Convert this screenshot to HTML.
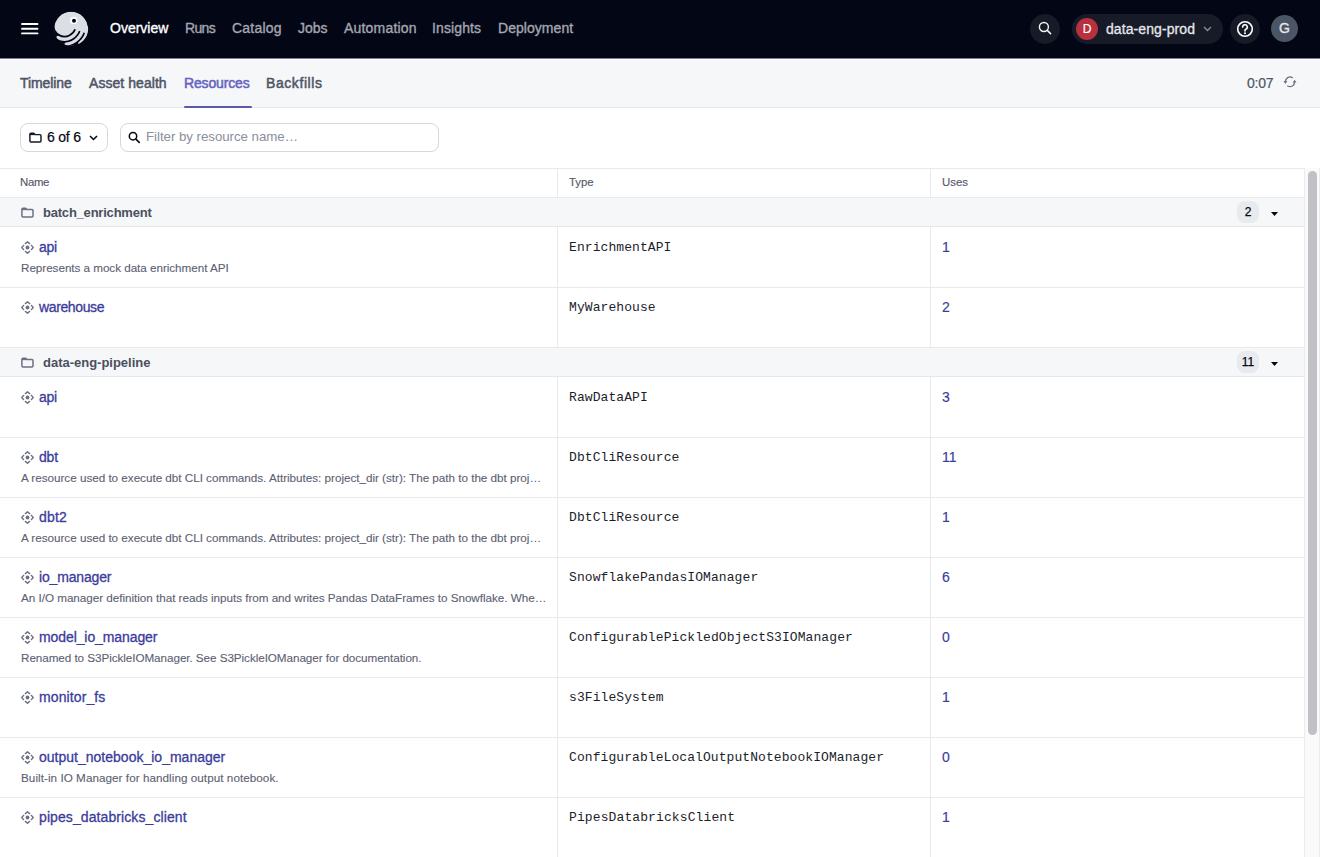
<!DOCTYPE html>
<html><head><meta charset="utf-8">
<style>
*{box-sizing:border-box;margin:0;padding:0}
html,body{width:1320px;height:857px;overflow:hidden;background:#fff;font-family:"Liberation Sans",sans-serif;color:#030615}
.abs{position:absolute}
#top{position:absolute;left:0;top:0;width:1320px;height:58px;background:#030615}
#top .nav{position:absolute;top:21px;font-size:14px;line-height:14px;color:#a3a6b1;white-space:nowrap;-webkit-text-stroke:0.35px currentColor}
#top .nav.active{color:#fff}
#sub{position:absolute;left:0;top:58px;width:1320px;height:50px;background:#f6f7f9;border-bottom:1px solid #e6e7eb;box-shadow:inset 0 1px 0 #7d7f88,inset 0 2px 0 #fff}
#sub .tab{position:absolute;top:18px;font-size:14px;line-height:14px;font-weight:normal;color:#4f5466;white-space:nowrap;-webkit-text-stroke:0.5px currentColor}
#sub .tab.active{color:#6563c1}
#filter{position:absolute;left:0;top:109px;width:1320px;height:59px;background:#fff}
.btn{position:absolute;left:20px;top:14px;width:88px;height:29px;border:1px solid #d5d7de;border-radius:8px;background:#fff}
.inp{position:absolute;left:120px;top:14px;width:319px;height:29px;border:1px solid #d5d7de;border-radius:8px;background:#fff}
#thead{position:absolute;left:0;top:168px;width:1304px;height:30px;border-top:1px solid #e8e9ed;border-bottom:1px solid #e8e9ed;background:#fff}
#thead .th{position:absolute;top:7px;font-size:11.4px;line-height:12px;color:#555a6b;-webkit-text-stroke:0.15px currentColor}
.grp{position:absolute;left:0;width:1304px;background:#f6f7f9;border-bottom:1px solid #e6e7eb}
.gname{position:absolute;left:43px;top:8px;font-size:13px;line-height:13px;font-weight:bold;color:#4a4f60;white-space:nowrap}
.badge{position:absolute;left:1237px;top:3px;width:22px;height:22px;border-radius:8px;background:#e9eaee;font-size:12px;line-height:22px;text-align:center;color:#030615;-webkit-text-stroke:0.25px currentColor}
.row{position:absolute;left:0;width:1304px;height:60px;border-bottom:1px solid #e8e9ed;background:#fff}
.vl{position:absolute;top:0;width:1px;height:60px;background:#e8e9ed}
.rname{position:absolute;left:39px;font-size:14px;line-height:14px;color:#3b3c9b;white-space:nowrap;-webkit-text-stroke:0.3px currentColor}
.rdesc{position:absolute;left:21px;font-size:11.7px;line-height:12px;color:#5c6172;white-space:nowrap;-webkit-text-stroke:0.1px currentColor}
.rtype{position:absolute;left:569px;font-family:"Liberation Mono",monospace;font-size:13px;line-height:13px;color:#1b1e2b;white-space:nowrap;letter-spacing:0.085px}
.ruses{position:absolute;left:942px;font-size:14px;line-height:14px;color:#3b3c9b;-webkit-text-stroke:0.15px currentColor}
#sb{position:absolute;left:1304px;top:168px;width:16px;height:689px;background:#fafafa;border-left:1px solid #ececec;border-right:1px solid #ececec}
#thumb{position:absolute;left:1308px;top:171px;width:9px;height:564px;border-radius:5px;background:#c1c1c5}
</style><style>#nav0{letter-spacing:0.000px}#nav1{letter-spacing:-0.667px}#nav2{letter-spacing:0.233px}#nav3{letter-spacing:0.000px}#nav4{letter-spacing:0.200px}#nav5{letter-spacing:0.114px}#nav6{letter-spacing:0.044px}#tab0{letter-spacing:-0.086px}#tab1{letter-spacing:0.055px}#tab2{letter-spacing:-0.150px}#tab3{letter-spacing:0.575px}#time{letter-spacing:-0.200px}#sixof{letter-spacing:-0.200px}#ph{letter-spacing:-0.043px}#dep{letter-spacing:0.083px}#thname{letter-spacing:-0.333px}#g0{letter-spacing:-0.213px}#g1{letter-spacing:-0.012px}#d0{letter-spacing:-0.042px}#d3{letter-spacing:-0.020px}#d4{letter-spacing:-0.020px}#d5{letter-spacing:-0.029px}#d6{letter-spacing:-0.061px}#d8{letter-spacing:0.046px}#t8{letter-spacing:0.077px}#t9{letter-spacing:0.110px}#t0{letter-spacing:0.083px}#nm0{letter-spacing:-0.300px}#nm1{letter-spacing:-0.375px}#nm2{letter-spacing:-0.300px}#nm3{letter-spacing:-0.200px}#nm4{letter-spacing:0.200px}#nm5{letter-spacing:-0.156px}#nm6{letter-spacing:-0.093px}#nm7{letter-spacing:0.111px}#nm8{letter-spacing:0.008px}#nm9{letter-spacing:0.091px}</style>
</head>
<body>
<div id="top">
  <svg class="abs" style="left:20px;top:20px" width="20" height="18" viewBox="0 0 20 18"><g stroke="#fff" stroke-width="1.9" stroke-linecap="round"><path d="M2 4H17.5"/><path d="M2 8.7H17.5"/><path d="M2 13.4H17.5"/></g></svg>
  <svg class="abs" style="left:52px;top:10px" width="40" height="38" viewBox="0 0 40 38">
    <defs><clipPath id="lc"><circle cx="19.05" cy="18.65" r="17.1"/></clipPath></defs>
    <g clip-path="url(#lc)">
    <circle cx="19.05" cy="18.65" r="16.85" fill="#dcdee6"/>
    <path d="M22.27 19.06L40.69 25.76A30 30 0 0 1 -15.69 5.24L2.73 11.94A10.4 10.4 0 0 0 22.27 19.06Z" fill="#030615"/>
    <g fill="none" stroke="#dcdee6" stroke-linecap="round"><path stroke-width="3.3" d="M26.10 16.69A13.65 13.65 0 0 1 5.88 27.44"/><path stroke-width="3.3" d="M31.03 17.12A18.6 18.6 0 0 1 14.12 34.03"/><path stroke-width="3.3" d="M35.91 17.55A23.5 23.5 0 0 1 27.92 33.24"/></g>
    </g>
    <circle cx="21.7" cy="10.4" r="3.7" fill="#fff"/>
    <circle cx="22" cy="10.8" r="2" fill="#030615"/>
  </svg>
  <div class="nav active" id="nav0" style="left:110px">Overview</div>
  <div class="nav" id="nav1" style="left:185px">Runs</div>
  <div class="nav" id="nav2" style="left:232px">Catalog</div>
  <div class="nav" id="nav3" style="left:298px">Jobs</div>
  <div class="nav" id="nav4" style="left:344px">Automation</div>
  <div class="nav" id="nav5" style="left:432px">Insights</div>
  <div class="nav" id="nav6" style="left:498px">Deployment</div>
  <!-- search -->
  <div class="abs" style="left:1030px;top:14px;width:30px;height:30px;border-radius:15px;background:#171a27"></div>
  <svg class="abs" style="left:1038px;top:21px" width="15" height="15" viewBox="0 0 15 15"><circle cx="5.9" cy="6" r="4.5" fill="none" stroke="#f4f4f6" stroke-width="1.4"/><path d="M9.2 9.3 12.5 12.6" stroke="#f4f4f6" stroke-width="1.6" stroke-linecap="round"/></svg>
  <!-- deployment pill -->
  <div class="abs" style="left:1072px;top:14px;width:151px;height:30px;border-radius:15px;background:#171a27"></div>
  <div class="abs" style="left:1076px;top:18px;width:22px;height:22px;border-radius:11px;background:#b9303e;color:#fff;font-size:12px;line-height:22px;text-align:center;-webkit-text-stroke:0.2px currentColor">D</div>
  <div class="abs" id="dep" style="left:1106px;top:22px;font-size:14px;line-height:14px;color:#e6e7ec;white-space:nowrap;-webkit-text-stroke:0.3px currentColor">data-eng-prod</div>
  <svg class="abs" style="left:1203px;top:26px" width="9" height="6" viewBox="0 0 9 6"><path d="M1 1 4.5 4.5 8 1" fill="none" stroke="#8d909c" stroke-width="1.3"/></svg>
  <!-- help -->
  <div class="abs" style="left:1230px;top:14px;width:30px;height:30px;border-radius:15px;background:#171a27"></div>
  <svg class="abs" style="left:1236px;top:20px" width="18" height="18" viewBox="0 0 18 18"><circle cx="9" cy="9" r="7.3" fill="none" stroke="#fff" stroke-width="1.6"/><path d="M6.7 7.1a2.3 2.3 0 1 1 3.2 2.1c-.6.3-.9.7-.9 1.3v.5" fill="none" stroke="#fff" stroke-width="1.6" stroke-linecap="round"/><circle cx="9" cy="13.2" r="1" fill="#fff"/></svg>
  <!-- avatar -->
  <div class="abs" style="left:1271px;top:15px;width:27px;height:27px;border-radius:14px;background:#4b5565;color:#e6e7ec;font-size:14px;line-height:27px;text-align:center;-webkit-text-stroke:0.3px currentColor">G</div>
</div>

<div id="sub">
  <div class="tab" id="tab0" style="left:20px">Timeline</div>
  <div class="tab" id="tab1" style="left:89px">Asset health</div>
  <div class="tab active" id="tab2" style="left:184px">Resources</div>
  <div class="tab" id="tab3" style="left:266px">Backfills</div>
  <div class="abs" style="left:184px;top:48px;width:68px;height:2px;background:#5a5aaa;border-radius:1px"></div>
  <div class="abs" id="time" style="left:1247px;top:18px;font-size:14px;line-height:14px;color:#4f5466;-webkit-text-stroke:0.2px currentColor">0:07</div>
  <svg class="abs" style="left:1282px;top:17px" width="16" height="14" viewBox="0 0 16 14"><g fill="none" stroke="#6b7082" stroke-width="1.3" stroke-linecap="round"><path d="M3.4 6.6A4.6 4.6 0 0 1 10.3 2.6"/><path d="M12.6 7A4.6 4.6 0 0 1 5.7 11"/></g><path d="M1.5 6.1H5.3L3.4 8.9Z" fill="#6b7082"/><path d="M14.5 7.5H10.7L12.6 4.7Z" fill="#6b7082"/></svg>
</div>

<div id="filter">
  <div class="btn"></div>
  <svg class="abs" style="left:28px;top:23px" width="15" height="12" viewBox="0 0 15 12"><g fill="none" stroke="#141826" stroke-width="1.45" stroke-linejoin="round"><path d="M1.9 2.6Q1.9 1.2 3.1 1.2H5.7L7 2.6H12Q13 2.6 13 3.7V8.7Q13 9.9 11.9 9.9H3Q1.9 9.9 1.9 8.7Z"/><path d="M1.9 2.4H6.5"/></g></svg>
  <div class="abs" id="sixof" style="left:47px;top:21px;font-size:14px;line-height:14px;color:#030615;-webkit-text-stroke:0.2px currentColor">6 of 6</div>
  <svg class="abs" style="left:89px;top:26px" width="9" height="6" viewBox="0 0 9 6"><path d="M1 1 4.5 4.5 8 1" fill="none" stroke="#030615" stroke-width="1.5"/></svg>
  <div class="inp"></div>
  <svg class="abs" style="left:128px;top:22px" width="13" height="13" viewBox="0 0 13 13"><circle cx="5" cy="5.2" r="3.7" fill="none" stroke="#030615" stroke-width="1.5"/><path d="M7.8 8 11.2 11.4" stroke="#030615" stroke-width="1.7" stroke-linecap="round"/></svg>
  <div class="abs" id="ph" style="left:146px;top:21px;font-size:13.3px;line-height:14px;color:#8a8f9c;white-space:nowrap">Filter by resource name…</div>
</div>

<div id="thead">
  <div class="th" id="thname" style="left:20px">Name</div>
  <div class="th" style="left:569px">Type</div>
  <div class="th" style="left:942px">Uses</div>
  <div class="abs" style="left:557px;top:0;width:1px;height:29px;background:#e8e9ed"></div>
  <div class="abs" style="left:930px;top:0;width:1px;height:29px;background:#e8e9ed"></div>
</div>

<div class="grp" style="top:198px;height:29px">
<svg class="abs" style="left:20px;top:9px" width="15" height="12" viewBox="0 0 15 12"><g fill="none" stroke="#6b7082" stroke-width="1.5" stroke-linejoin="round"><path d="M1.9 2.6Q1.9 1.2 3.1 1.2H5.7L7 2.6H12Q13 2.6 13 3.7V8.7Q13 9.9 11.9 9.9H3Q1.9 9.9 1.9 8.7Z"/><path d="M1.9 2.4H6.5"/></g></svg>
<div class="gname" id="g0">batch_enrichment</div>
<div class="badge">2</div>
<svg class="abs" style="left:1271px;top:14px" width="7" height="4" viewBox="0 0 7 4"><path d="M0 0h7L3.5 3.9z" fill="#030615"/></svg>
</div>
<div class="row" style="top:227px;height:61px">
<svg class="abs" style="left:21px;top:14px" width="13" height="13" viewBox="0 0 13 13"><g fill="none" stroke="#6b7082" stroke-width="1.4" stroke-linecap="round" stroke-linejoin="round"><path d="M4.4 2.6 6.5 0.8 8.6 2.6"/><path d="M4.4 10.4 6.5 12.2 8.6 10.4"/><path d="M2.6 4.4 0.8 6.5 2.6 8.6"/><path d="M10.4 4.4 12.2 6.5 10.4 8.6"/></g><circle cx="6.5" cy="6.5" r="1.9" fill="#6b7082"/></svg>
<div class="rname" id="nm0" style="top:13px">api</div>
<div class="rdesc" id="d0" style="top:35px">Represents a mock data enrichment API</div>
<div class="rtype" id="t0" style="top:14px">EnrichmentAPI</div>
<div class="ruses" style="top:13px">1</div>
<div class="vl" style="left:557px;height:61px"></div><div class="vl" style="left:930px;height:61px"></div>
</div>
<div class="row" style="top:288px;height:60px">
<svg class="abs" style="left:21px;top:13px" width="13" height="13" viewBox="0 0 13 13"><g fill="none" stroke="#6b7082" stroke-width="1.4" stroke-linecap="round" stroke-linejoin="round"><path d="M4.4 2.6 6.5 0.8 8.6 2.6"/><path d="M4.4 10.4 6.5 12.2 8.6 10.4"/><path d="M2.6 4.4 0.8 6.5 2.6 8.6"/><path d="M10.4 4.4 12.2 6.5 10.4 8.6"/></g><circle cx="6.5" cy="6.5" r="1.9" fill="#6b7082"/></svg>
<div class="rname" id="nm1" style="top:12px">warehouse</div>
<div class="rtype" id="t1" style="top:13px">MyWarehouse</div>
<div class="ruses" style="top:12px">2</div>
<div class="vl" style="left:557px;height:60px"></div><div class="vl" style="left:930px;height:60px"></div>
</div>
<div class="grp" style="top:348px;height:29px">
<svg class="abs" style="left:20px;top:9px" width="15" height="12" viewBox="0 0 15 12"><g fill="none" stroke="#6b7082" stroke-width="1.5" stroke-linejoin="round"><path d="M1.9 2.6Q1.9 1.2 3.1 1.2H5.7L7 2.6H12Q13 2.6 13 3.7V8.7Q13 9.9 11.9 9.9H3Q1.9 9.9 1.9 8.7Z"/><path d="M1.9 2.4H6.5"/></g></svg>
<div class="gname" id="g1">data-eng-pipeline</div>
<div class="badge">11</div>
<svg class="abs" style="left:1271px;top:14px" width="7" height="4" viewBox="0 0 7 4"><path d="M0 0h7L3.5 3.9z" fill="#030615"/></svg>
</div>
<div class="row" style="top:377px;height:61px">
<svg class="abs" style="left:21px;top:14px" width="13" height="13" viewBox="0 0 13 13"><g fill="none" stroke="#6b7082" stroke-width="1.4" stroke-linecap="round" stroke-linejoin="round"><path d="M4.4 2.6 6.5 0.8 8.6 2.6"/><path d="M4.4 10.4 6.5 12.2 8.6 10.4"/><path d="M2.6 4.4 0.8 6.5 2.6 8.6"/><path d="M10.4 4.4 12.2 6.5 10.4 8.6"/></g><circle cx="6.5" cy="6.5" r="1.9" fill="#6b7082"/></svg>
<div class="rname" id="nm2" style="top:13px">api</div>
<div class="rtype" id="t2" style="top:14px">RawDataAPI</div>
<div class="ruses" style="top:13px">3</div>
<div class="vl" style="left:557px;height:61px"></div><div class="vl" style="left:930px;height:61px"></div>
</div>
<div class="row" style="top:438px;height:60px">
<svg class="abs" style="left:21px;top:13px" width="13" height="13" viewBox="0 0 13 13"><g fill="none" stroke="#6b7082" stroke-width="1.4" stroke-linecap="round" stroke-linejoin="round"><path d="M4.4 2.6 6.5 0.8 8.6 2.6"/><path d="M4.4 10.4 6.5 12.2 8.6 10.4"/><path d="M2.6 4.4 0.8 6.5 2.6 8.6"/><path d="M10.4 4.4 12.2 6.5 10.4 8.6"/></g><circle cx="6.5" cy="6.5" r="1.9" fill="#6b7082"/></svg>
<div class="rname" id="nm3" style="top:12px">dbt</div>
<div class="rdesc" id="d3" style="top:34px">A resource used to execute dbt CLI commands. Attributes: project_dir (str): The path to the dbt proj…</div>
<div class="rtype" id="t3" style="top:13px">DbtCliResource</div>
<div class="ruses" style="top:12px">11</div>
<div class="vl" style="left:557px;height:60px"></div><div class="vl" style="left:930px;height:60px"></div>
</div>
<div class="row" style="top:498px;height:60px">
<svg class="abs" style="left:21px;top:13px" width="13" height="13" viewBox="0 0 13 13"><g fill="none" stroke="#6b7082" stroke-width="1.4" stroke-linecap="round" stroke-linejoin="round"><path d="M4.4 2.6 6.5 0.8 8.6 2.6"/><path d="M4.4 10.4 6.5 12.2 8.6 10.4"/><path d="M2.6 4.4 0.8 6.5 2.6 8.6"/><path d="M10.4 4.4 12.2 6.5 10.4 8.6"/></g><circle cx="6.5" cy="6.5" r="1.9" fill="#6b7082"/></svg>
<div class="rname" id="nm4" style="top:12px">dbt2</div>
<div class="rdesc" id="d4" style="top:34px">A resource used to execute dbt CLI commands. Attributes: project_dir (str): The path to the dbt proj…</div>
<div class="rtype" id="t4" style="top:13px">DbtCliResource</div>
<div class="ruses" style="top:12px">1</div>
<div class="vl" style="left:557px;height:60px"></div><div class="vl" style="left:930px;height:60px"></div>
</div>
<div class="row" style="top:558px;height:60px">
<svg class="abs" style="left:21px;top:13px" width="13" height="13" viewBox="0 0 13 13"><g fill="none" stroke="#6b7082" stroke-width="1.4" stroke-linecap="round" stroke-linejoin="round"><path d="M4.4 2.6 6.5 0.8 8.6 2.6"/><path d="M4.4 10.4 6.5 12.2 8.6 10.4"/><path d="M2.6 4.4 0.8 6.5 2.6 8.6"/><path d="M10.4 4.4 12.2 6.5 10.4 8.6"/></g><circle cx="6.5" cy="6.5" r="1.9" fill="#6b7082"/></svg>
<div class="rname" id="nm5" style="top:12px">io_manager</div>
<div class="rdesc" id="d5" style="top:34px">An I/O manager definition that reads inputs from and writes Pandas DataFrames to Snowflake. Whe…</div>
<div class="rtype" id="t5" style="top:13px">SnowflakePandasIOManager</div>
<div class="ruses" style="top:12px">6</div>
<div class="vl" style="left:557px;height:60px"></div><div class="vl" style="left:930px;height:60px"></div>
</div>
<div class="row" style="top:618px;height:60px">
<svg class="abs" style="left:21px;top:13px" width="13" height="13" viewBox="0 0 13 13"><g fill="none" stroke="#6b7082" stroke-width="1.4" stroke-linecap="round" stroke-linejoin="round"><path d="M4.4 2.6 6.5 0.8 8.6 2.6"/><path d="M4.4 10.4 6.5 12.2 8.6 10.4"/><path d="M2.6 4.4 0.8 6.5 2.6 8.6"/><path d="M10.4 4.4 12.2 6.5 10.4 8.6"/></g><circle cx="6.5" cy="6.5" r="1.9" fill="#6b7082"/></svg>
<div class="rname" id="nm6" style="top:12px">model_io_manager</div>
<div class="rdesc" id="d6" style="top:34px">Renamed to S3PickleIOManager. See S3PickleIOManager for documentation.</div>
<div class="rtype" id="t6" style="top:13px">ConfigurablePickledObjectS3IOManager</div>
<div class="ruses" style="top:12px">0</div>
<div class="vl" style="left:557px;height:60px"></div><div class="vl" style="left:930px;height:60px"></div>
</div>
<div class="row" style="top:678px;height:60px">
<svg class="abs" style="left:21px;top:13px" width="13" height="13" viewBox="0 0 13 13"><g fill="none" stroke="#6b7082" stroke-width="1.4" stroke-linecap="round" stroke-linejoin="round"><path d="M4.4 2.6 6.5 0.8 8.6 2.6"/><path d="M4.4 10.4 6.5 12.2 8.6 10.4"/><path d="M2.6 4.4 0.8 6.5 2.6 8.6"/><path d="M10.4 4.4 12.2 6.5 10.4 8.6"/></g><circle cx="6.5" cy="6.5" r="1.9" fill="#6b7082"/></svg>
<div class="rname" id="nm7" style="top:12px">monitor_fs</div>
<div class="rtype" id="t7" style="top:13px">s3FileSystem</div>
<div class="ruses" style="top:12px">1</div>
<div class="vl" style="left:557px;height:60px"></div><div class="vl" style="left:930px;height:60px"></div>
</div>
<div class="row" style="top:738px;height:60px">
<svg class="abs" style="left:21px;top:13px" width="13" height="13" viewBox="0 0 13 13"><g fill="none" stroke="#6b7082" stroke-width="1.4" stroke-linecap="round" stroke-linejoin="round"><path d="M4.4 2.6 6.5 0.8 8.6 2.6"/><path d="M4.4 10.4 6.5 12.2 8.6 10.4"/><path d="M2.6 4.4 0.8 6.5 2.6 8.6"/><path d="M10.4 4.4 12.2 6.5 10.4 8.6"/></g><circle cx="6.5" cy="6.5" r="1.9" fill="#6b7082"/></svg>
<div class="rname" id="nm8" style="top:12px">output_notebook_io_manager</div>
<div class="rdesc" id="d8" style="top:34px">Built-in IO Manager for handling output notebook.</div>
<div class="rtype" id="t8" style="top:13px">ConfigurableLocalOutputNotebookIOManager</div>
<div class="ruses" style="top:12px">0</div>
<div class="vl" style="left:557px;height:60px"></div><div class="vl" style="left:930px;height:60px"></div>
</div>
<div class="row" style="top:798px;height:60px">
<svg class="abs" style="left:21px;top:13px" width="13" height="13" viewBox="0 0 13 13"><g fill="none" stroke="#6b7082" stroke-width="1.4" stroke-linecap="round" stroke-linejoin="round"><path d="M4.4 2.6 6.5 0.8 8.6 2.6"/><path d="M4.4 10.4 6.5 12.2 8.6 10.4"/><path d="M2.6 4.4 0.8 6.5 2.6 8.6"/><path d="M10.4 4.4 12.2 6.5 10.4 8.6"/></g><circle cx="6.5" cy="6.5" r="1.9" fill="#6b7082"/></svg>
<div class="rname" id="nm9" style="top:12px">pipes_databricks_client</div>
<div class="rtype" id="t9" style="top:13px">PipesDatabricksClient</div>
<div class="ruses" style="top:12px">1</div>
<div class="vl" style="left:557px;height:60px"></div><div class="vl" style="left:930px;height:60px"></div>
</div>

<div id="sb"></div>
<div id="thumb"></div>
</body></html>
